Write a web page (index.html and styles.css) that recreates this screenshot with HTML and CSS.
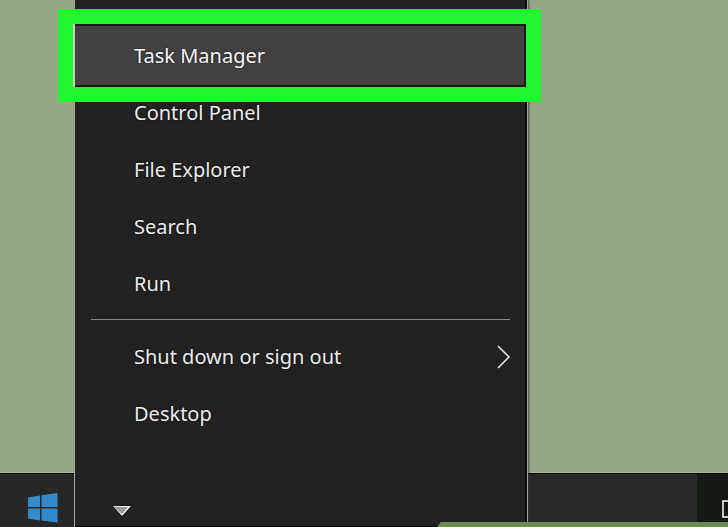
FILE: index.html
```html
<!DOCTYPE html>
<html lang="en">
<head>
<meta charset="utf-8">
<title>Quick link menu</title>
<link rel="stylesheet" href="styles.css">
</head>
<body>
<main class="desktop">
  <nav class="menu" aria-label="Quick links">
    <div class="menu-items">
      <button class="item current" type="button">Task Manager</button>
      <button class="item" type="button">Control Panel</button>
      <button class="item" type="button">File Explorer</button>
      <button class="item" type="button">Search</button>
      <button class="item" type="button">Run</button>
      <hr class="divider">
      <button class="item" type="button">Shut down or sign out
        <svg class="chevron" width="16" height="26" viewBox="0 0 16 26" aria-hidden="true"><path d="M3 2 14 13 3 24"/></svg>
      </button>
      <button class="item" type="button">Desktop</button>
    </div>
    <button class="more" type="button" aria-label="Scroll down">
      <svg width="20" height="12" viewBox="0 0 20 12" aria-hidden="true"><path d="M0 0H20L10 12Z" fill="#111"/><path d="M1 1H19L10 11Z" fill="#f4f4f4"/><path d="M2 2H16L10 9Z" fill="#999"/></svg>
    </button>
  </nav>
</main>
<footer class="taskbar">
  <button class="start" type="button" aria-label="Start">
    <svg width="30" height="30" viewBox="0 0 30 30" aria-hidden="true"><path fill="#348bcb" d="M0 4.500 12 2.500V14H0ZM13.500 2.300 29.500 0V14H13.500ZM0 15.500H12V27.500L0 25.500ZM13.500 15.500H29.500V29.500L13.500 27.500Z"/></svg>
  </button>
  <button class="task-view" type="button" aria-label="Task view">
    <svg width="7" height="20" viewBox="0 0 7 20" aria-hidden="true"><path d="M7 2H2V18H7" fill="none" stroke="#fff" stroke-width="1.500"/></svg>
  </button>
</footer>
<div class="strip"></div>
</body>
</html>
```
FILE: styles.css
```css
* {
  box-sizing: border-box;
}

body {
  position: relative;
  display: flex;
  flex-direction: column;
  min-height: 100vh;
  margin: 0;
  overflow: hidden;
  background: #96a786;
  font-family: "Noto Sans", "Open Sans", sans-serif;
}

button {
  padding: 0;
  border: 0;
  background: none;
  color: inherit;
  font: inherit;
}

.desktop {
  flex: 1;
}

.menu {
  position: absolute;
  z-index: 1;
  top: 0;
  bottom: 0;
  left: 74px;
  display: flex;
  flex-direction: column;
  justify-content: space-between;
  width: 454px;
  border: solid #a5a8a1;
  border-width: 0 1px;
  background: #222;
  box-shadow: inset 0 -1px #000, inset -2px 0 #0b0b0b, 1px 0 2px #333c;
  color: #eee;
  font-size: 20px;
  line-height: 28px;
}

.menu-items {
  display: flex;
  flex-direction: column;
  padding-top: 27px;
}

.item {
  display: flex;
  align-items: center;
  justify-content: space-between;
  height: 57px;
  padding: 0 16px 0 59px;
  text-align: left;
  text-shadow: 0 0 2px #000;
}

.current {
  position: relative;
  z-index: 0;
  color: #fff;
}

/* The callout frame extends past both sides of the menu. */
.current::after {
  content: "";
  position: absolute;
  z-index: -1;
  inset: -18px -14px -18px -17px;
  border: 15px solid #20f72e;
  background: #424242;
  box-shadow: inset 2px 0 #c3d4bd, inset 0 0 0 2px #181a18;
}

.divider {
  align-self: stretch;
  height: 1px;
  margin: 7px 17px 8px 16px;
  border: 0;
  background: #888a86;
}

.chevron {
  fill: none;
  stroke: #eee;
  stroke-width: 1.5;
}

.more {
  display: flex;
  align-self: flex-start;
  margin: 0 0 10px 37px;
}

.taskbar {
  display: flex;
  align-items: flex-end;
  justify-content: space-between;
  height: 55px;
  border-top: 1px solid #a9bb99;
  background: #292929;
  box-shadow: inset 0 1px #000;
}

.start {
  display: flex;
  align-items: flex-end;
  justify-content: flex-end;
  width: 74px;
  height: 53px;
  padding: 0 16px 4px 0;
  background: #272825;
}

.task-view {
  display: flex;
  align-items: flex-end;
  justify-content: flex-end;
  width: 31px;
  height: 53px;
  padding-bottom: 8px;
  background: #151914;
}

.strip {
  position: absolute;
  z-index: 2;
  right: 0;
  bottom: 0;
  width: 40%;
  height: 5px;
  background: #6d8955;
  clip-path: polygon(4px 0, 100% 0, 100% 100%, 0 100%);
}
```
